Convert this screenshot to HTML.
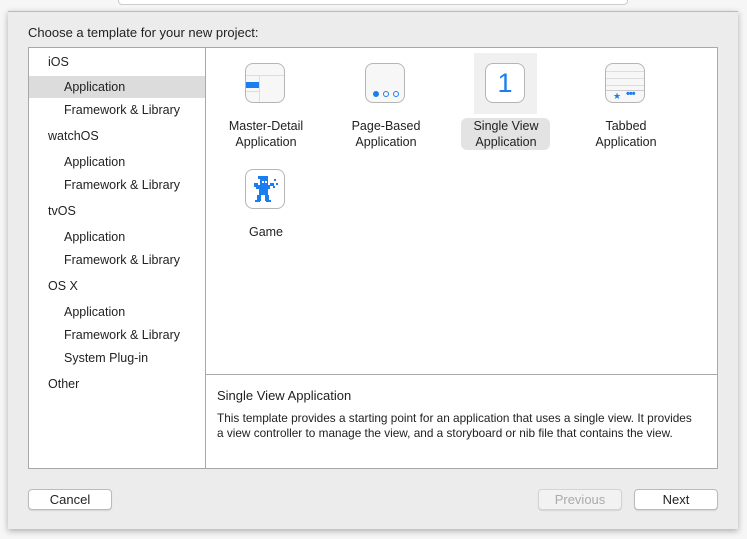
<!DOCTYPE html>
<html><head><style>
*{margin:0;padding:0;box-sizing:border-box}
body{width:747px;height:539px;background:#f6f6f6;font-family:"Liberation Sans",sans-serif;font-size:12.5px;color:#222;position:relative;overflow:hidden}
.top{position:absolute;left:118px;top:-6px;width:510px;height:11px;border:1px solid #ccc;border-radius:4px;background:#fff}
.sheet{position:absolute;left:8px;top:11px;width:730px;height:518px;background:#ececec;border-top:1px solid #bbb;box-shadow:0 2px 6px rgba(0,0,0,.3)}
.abs{position:absolute}
.title{left:20px;top:13px;font-size:13px}
.box{left:20px;top:35px;width:690px;height:422px;border:1px solid #a8a8a8;background:#fff}
.side{left:0;top:0;width:177px;height:420px;border-right:1px solid #a8a8a8}
.side div{position:absolute;white-space:nowrap}
.sel{left:0;width:176px;height:22px;background:#dcdcdc}
.ic{position:absolute;width:40px;height:40px;border:1.5px solid #b5b5b5;border-radius:8px;background:#f7f7f7;overflow:hidden}
.lb{position:absolute;width:100px;text-align:center;line-height:16px;font-size:12.5px}
.desc{left:177px;top:326px;width:511px;height:94px;border-top:1px solid #a8a8a8}
.btn{position:absolute;top:477px;height:21px;border:1px solid #bbb;border-radius:4px;background:#fff;text-align:center;line-height:19px;font-size:13px;box-shadow:0 1px 1px rgba(0,0,0,.1)}
</style></head><body>
<div class="top"></div>
<div class="sheet">
<div class="abs title">Choose a template for your new project:</div>
<div class="abs box">
 <div class="abs side">
  <div class="sel" style="top:28px"></div>
  <div style="left:19px;top:7px">iOS</div>
  <div style="left:35px;top:32px">Application</div>
  <div style="left:35px;top:55px">Framework &amp; Library</div>
  <div style="left:19px;top:81px">watchOS</div>
  <div style="left:35px;top:107px">Application</div>
  <div style="left:35px;top:130px">Framework &amp; Library</div>
  <div style="left:19px;top:156px">tvOS</div>
  <div style="left:35px;top:182px">Application</div>
  <div style="left:35px;top:205px">Framework &amp; Library</div>
  <div style="left:19px;top:231px">OS X</div>
  <div style="left:35px;top:257px">Application</div>
  <div style="left:35px;top:280px">Framework &amp; Library</div>
  <div style="left:35px;top:303px">System Plug-in</div>
  <div style="left:19px;top:329px">Other</div>
 </div>
 <div class="abs" style="left:445px;top:5px;width:63px;height:61px;background:#f0f0f0"></div>
 <div class="abs" style="left:432px;top:70px;width:89px;height:32px;background:#e3e3e3;border-radius:6px"></div>
 <div class="ic" style="left:216px;top:15px">
  <div class="abs" style="left:0;top:11px;width:40px;border-top:1px solid #ddd"></div>
  <div class="abs" style="left:0;top:27px;width:13px;border-top:1px solid #ddd"></div>
  <div class="abs" style="left:13px;top:11px;height:30px;border-left:1px solid #ddd"></div>
  <div class="abs" style="left:0;top:18px;width:13px;height:6px;background:#1a7ef0"></div>
 </div>
 <div class="ic" style="left:336px;top:15px">
  <div class="abs" style="left:7px;top:27px;width:6px;height:6px;border-radius:50%;background:#1a7ef0"></div>
  <div class="abs" style="left:17px;top:27px;width:6px;height:6px;border-radius:50%;border:1.3px solid #1a7ef0"></div>
  <div class="abs" style="left:27px;top:27px;width:6px;height:6px;border-radius:50%;border:1.3px solid #1a7ef0"></div>
 </div>
 <div class="ic" style="left:456px;top:15px;background:#fff"><div style="text-align:center;color:#1a7ef0;font-size:27px;line-height:38px">1</div></div>
 <div class="ic" style="left:576px;top:15px">
  <div class="abs" style="left:0;top:7px;width:40px;border-top:1px solid #ddd"></div>
  <div class="abs" style="left:0;top:14px;width:40px;border-top:1px solid #ddd"></div>
  <div class="abs" style="left:0;top:21px;width:40px;border-top:1px solid #ddd"></div>
  <div class="abs" style="left:0;top:26px;width:40px;border-top:1px solid #ccc"></div>
  <div class="abs" style="left:7px;top:27px;color:#1a7ef0;font-size:9px">★</div>
  <div class="abs" style="left:20px;top:24px;color:#1a7ef0;font-size:11px;letter-spacing:-1px;font-weight:bold">•••</div>
 </div>
 <div class="ic" style="left:216px;top:121px;background:#fff">
  <svg width="40" height="40" viewBox="0 0 40 40"><g fill="#1a7ef0">
  <rect x="12" y="6" width="10" height="3"/><rect x="14" y="9" width="8" height="6"/><rect x="10" y="15" width="14" height="4"/><rect x="8" y="13" width="4" height="4"/><rect x="24" y="13" width="4" height="3"/><rect x="13" y="19" width="9" height="6"/><rect x="11" y="25" width="4" height="6"/><rect x="19" y="25" width="4" height="6"/><rect x="9" y="30" width="5" height="2"/><rect x="20" y="30" width="5" height="2"/><rect x="28" y="9" width="2" height="2"/><rect x="30" y="13" width="2" height="2"/><rect x="27" y="16" width="2" height="2"/></g>
  <rect x="16" y="11" width="2" height="2" fill="#fff"/><rect x="19" y="11" width="2" height="2" fill="#fff"/></svg>
 </div>
 <div class="lb" style="left:187px;top:70px">Master-Detail<br>Application</div>
 <div class="lb" style="left:307px;top:70px">Page-Based<br>Application</div>
 <div class="lb" style="left:427px;top:70px">Single View<br>Application</div>
 <div class="lb" style="left:547px;top:70px">Tabbed<br>Application</div>
 <div class="lb" style="left:187px;top:176px">Game</div>
 <div class="abs desc">
  <div class="abs" style="left:11px;top:13px;font-size:13px">Single View Application</div>
  <div class="abs" style="left:11px;top:36px;font-size:11.8px;line-height:15px;width:500px;white-space:nowrap">This template provides a starting point for an application that uses a single view. It provides<br>a view controller to manage the view, and a storyboard or nib file that contains the view.</div>
 </div>
</div>
<div class="btn" style="left:20px;width:84px">Cancel</div>
<div class="btn" style="left:530px;width:84px;color:#aaa;background:#f2f2f2;border-color:#d4d4d4">Previous</div>
<div class="btn" style="left:626px;width:84px">Next</div>
</div>
</body></html>
